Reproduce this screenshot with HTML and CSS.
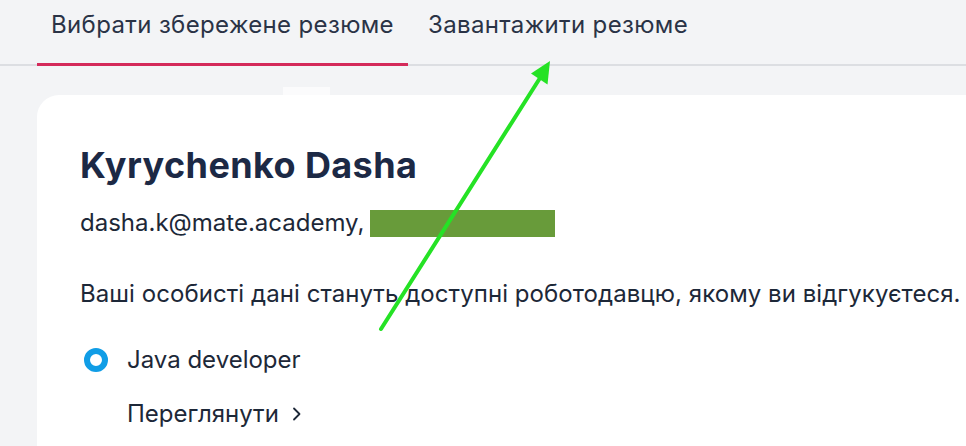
FILE: index.html
```html
<!DOCTYPE html>
<html lang="uk">
<head>
<meta charset="utf-8">
<title>Резюме</title>
<link rel="stylesheet" href="styles.css">
</head>
<body>
<div class="page">
  <nav class="tabs">
    <div class="tab tab-active">Вибрати збережене резюме</div>
    <div class="tab">Завантажити резюме</div>
  </nav>
  <section class="card">
    <span class="card-notch"></span>
    <h1 class="name">Kyrychenko Dasha</h1>
    <p class="contacts">dasha.k@mate.academy, <span class="redacted"></span></p>
    <p class="notice">Ваші особисті дані стануть доступні роботодавцю, якому ви відгукуєтеся.</p>
    <label class="option">
      <span class="radio"></span>
      <span class="option-label">Java developer</span>
    </label>
    <a class="view-link">Переглянути<svg class="chev" width="10" height="14" viewBox="0 0 10 14"><path d="M2 1.5 L7.5 7 L2 12.5" fill="none" stroke="#1d2838" stroke-width="1.8" stroke-linecap="round" stroke-linejoin="round"/></svg></a>
  </section>
  <svg class="arrow" width="966" height="446" viewBox="0 0 966 446">
    <line x1="381" y1="329" x2="540" y2="78" stroke="#25e225" stroke-width="4" stroke-linecap="round"/>
    <polygon points="550,61 547.5,84.5 531,73.5" fill="#25e225"/>
  </svg>
</div>
</body>
</html>
```

FILE: styles.css
```css
html, body {
  margin: 0;
  padding: 0;
}
body {
  background: #f3f4f6;
  font-family: Inter, "Noto Sans", sans-serif;
  color: #1d2838;
  overflow: hidden;
  width: 966px;
  height: 446px;
}
.page {
  position: relative;
  width: 966px;
  height: 446px;
  overflow: hidden;
}
.tabs {
  display: flex;
  padding-left: 37px;
  border-bottom: 2px solid #dcdee2;
  gap: 6px;
}
.tab {
  font-size: 24px;
  line-height: 30px;
  padding: 10px 14px 23px;
  margin-bottom: -2px;
  border-bottom: 3px solid transparent;
  color: #2a3346;
  letter-spacing: 0.36px;
}
.tab-active {
  border-bottom-color: #d42a5a;
}
.card {
  position: relative;
  margin: 29px -40px 0 37px;
  background: #fff;
  border-radius: 22px 0 0 0;
  padding: 48px 0 40px 43px;
  height: 400px;
}
.card-notch {
  position: absolute;
  left: 246px;
  top: -8px;
  width: 47px;
  height: 8px;
  background: #fbfbfc;
}
.name {
  margin: 0;
  font-size: 36px;
  line-height: 44px;
  font-weight: 700;
  color: #1c2945;
  letter-spacing: 0.4px;
}
.contacts {
  margin: 21px 0 0;
  font-size: 24px;
  line-height: 30px;
  display: flex;
  align-items: center;
  white-space: pre;
}
.redacted {
  display: inline-block;
  width: 185px;
  height: 27px;
  background: #689b3a;
  margin-left: -1px;
}
.notice {
  margin: 41px 0 0;
  font-size: 24px;
  line-height: 30px;
  white-space: nowrap;
  letter-spacing: 0.06px;
}
.option {
  margin-top: 36px;
  display: flex;
  align-items: center;
  gap: 19px;
  font-size: 24px;
  line-height: 30px;
}
.radio {
  width: 12px;
  height: 12px;
  border: 6px solid #109de6;
  border-radius: 50%;
  box-sizing: content-box;
  margin-left: 4px;
}
.view-link {
  display: flex;
  align-items: center;
  margin: 24px 0 0 47px;
  font-size: 24px;
  line-height: 30px;
  color: #1d2838;
}
.chev {
  margin-left: 13px;
}
.arrow {
  position: absolute;
  left: 0;
  top: 0;
}
```
